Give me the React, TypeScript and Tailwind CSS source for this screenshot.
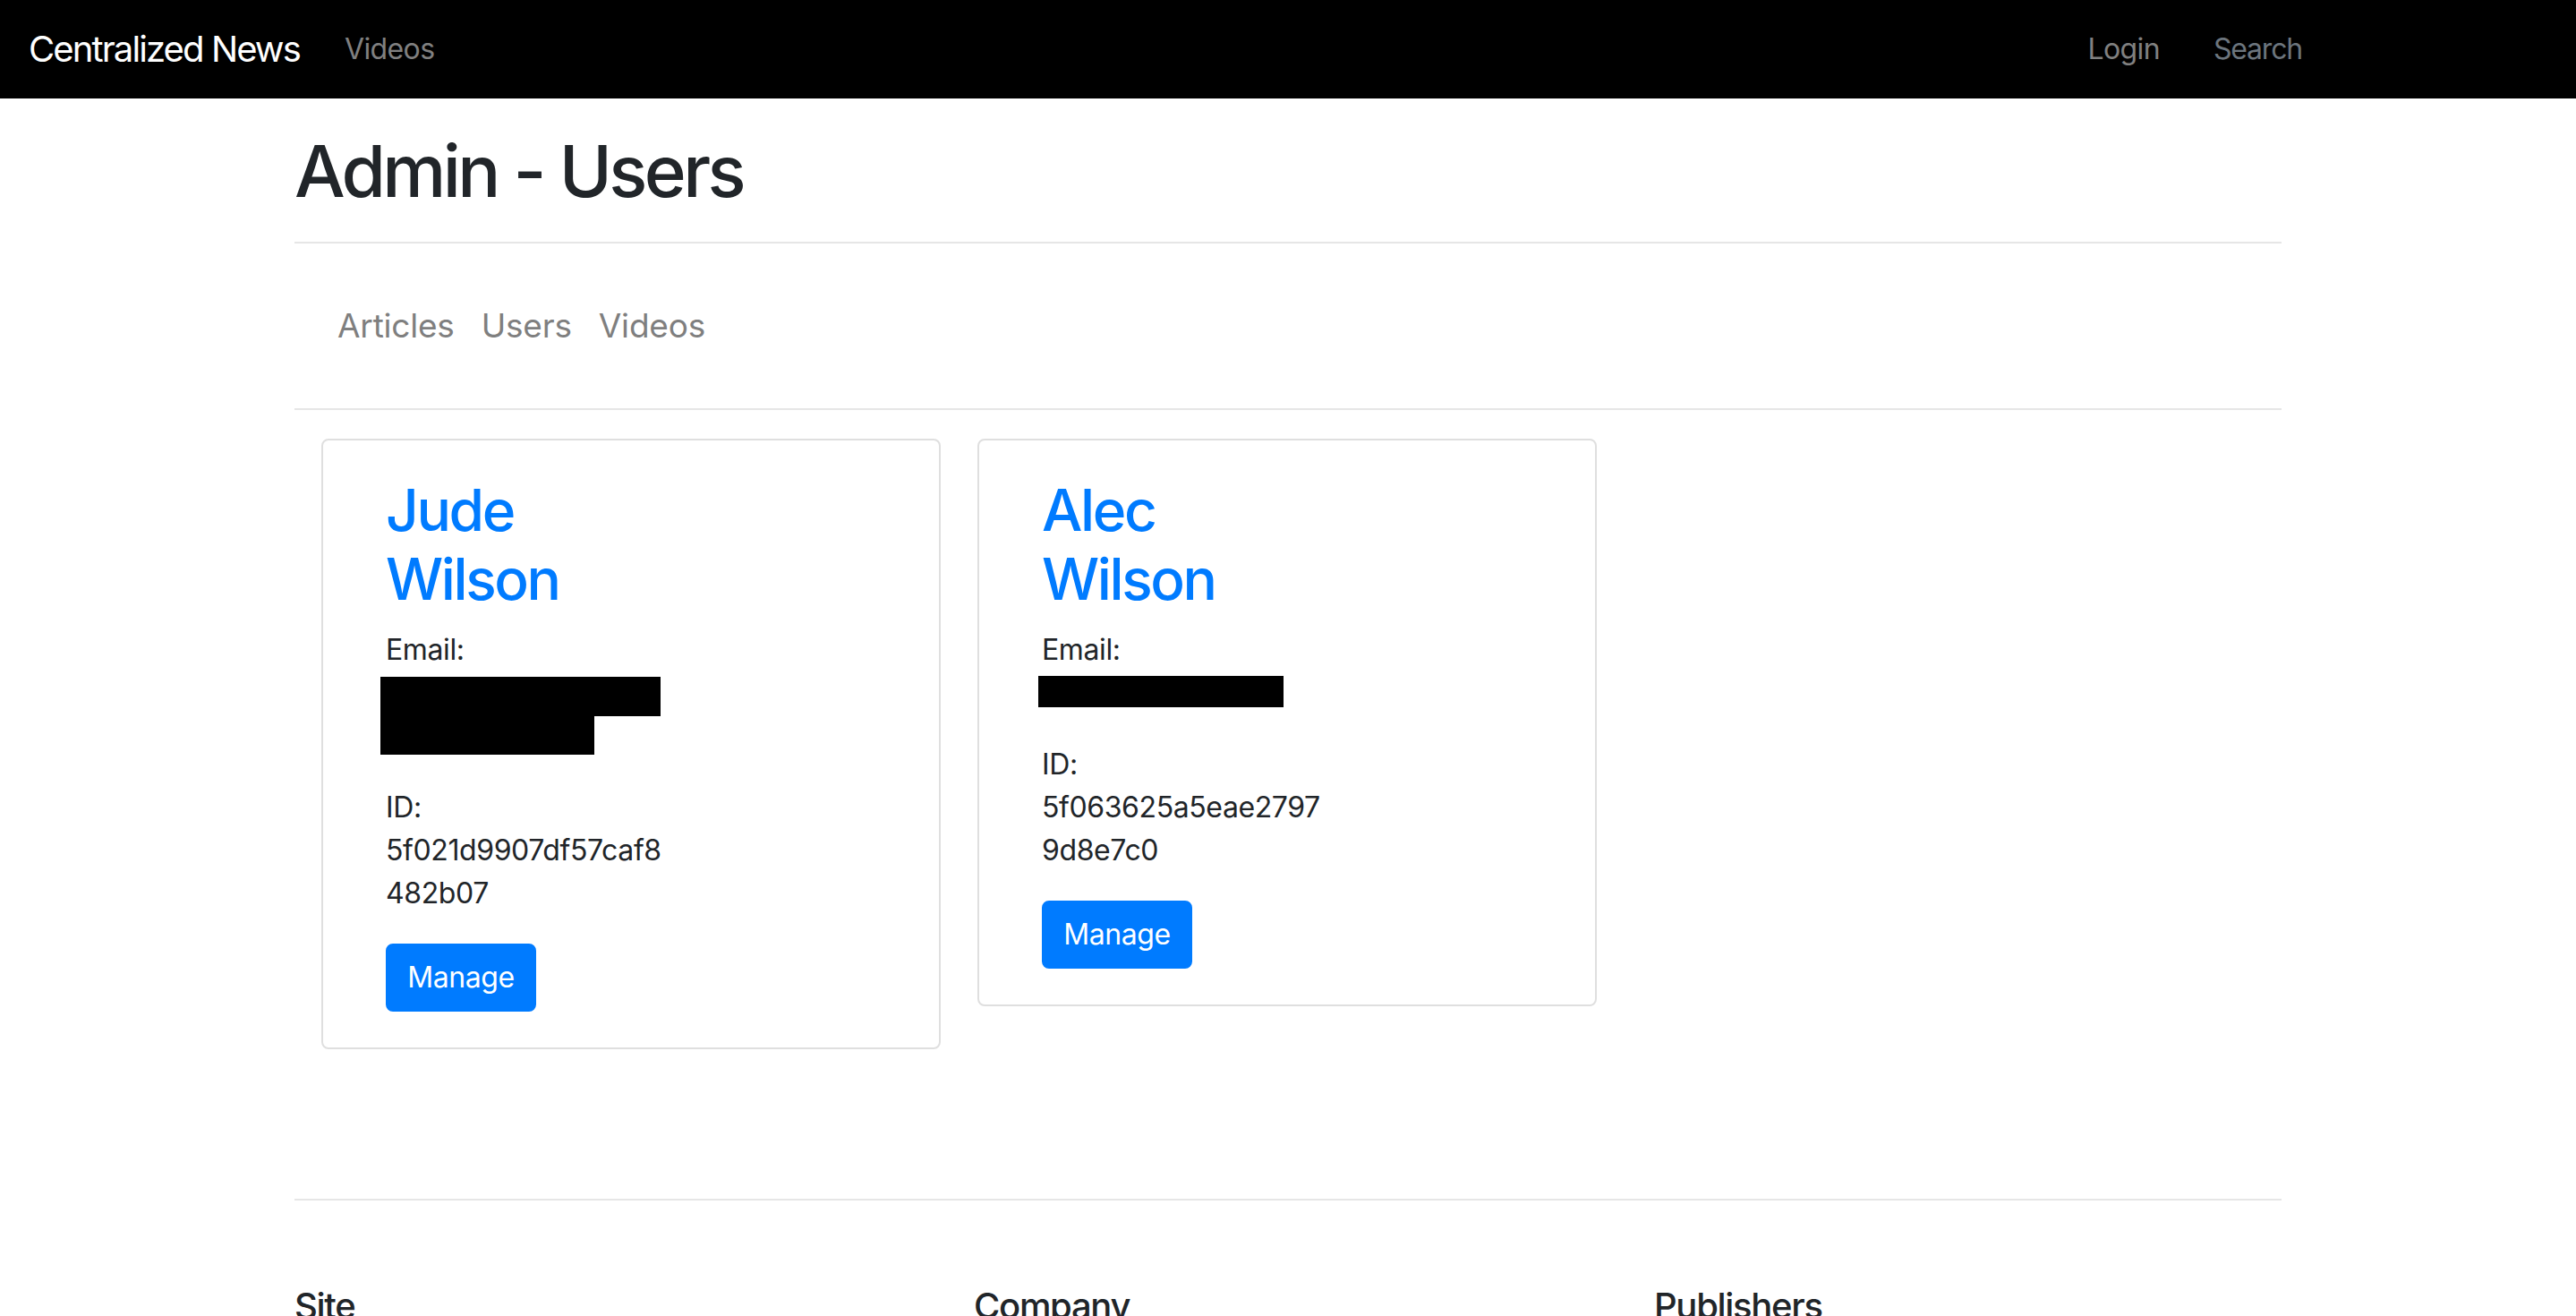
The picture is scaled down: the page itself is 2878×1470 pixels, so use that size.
import React from "react";

type User = {
  first: string;
  last: string;
  idLines: [string, string];
  twoLineEmail: boolean;
};

const users: User[] = [
  { first: "Jude", last: "Wilson", idLines: ["5f021d9907df57caf8", "482b07"], twoLineEmail: true },
  { first: "Alec", last: "Wilson", idLines: ["5f063625a5eae2797", "9d8e7c0"], twoLineEmail: false },
];

function UserCard({ u }: { u: User }) {
  return (
    <div className="w-[692px] shrink-0 rounded-[8px] border-2 border-[#dfdfdf] bg-white pt-[40px] pb-[40px] pl-[70px]">
      <h2 className="mb-[16px] text-[64px] font-medium leading-[76.8px] tracking-[-2.4px] text-[#007bff]">
        {u.first}
        <br />
        {u.last}
      </h2>
      <div className="mb-[32px] text-[32px] leading-[48px] tracking-[-0.4px] text-[#212529]">
        <div>Email:</div>
        {u.twoLineEmail ? (
          <div className="-ml-[6px] h-[96px] pt-[6px]">
            <div className="h-[44px] w-[313px] bg-black" />
            <div className="h-[43px] w-[239px] bg-black" />
          </div>
        ) : (
          <div className="-ml-[4px] h-[48px] pt-[5px]">
            <div className="h-[35px] w-[274px] bg-black" />
          </div>
        )}
      </div>
      <div className="mb-[32px] text-[32px] leading-[48px] tracking-[-0.4px] text-[#212529]">
        <div>ID:</div>
        <div>{u.idLines[0]}</div>
        <div>{u.idLines[1]}</div>
      </div>
      <button className="flex h-[76px] w-[168px] items-center justify-center rounded-[8px] border-2 border-[#007bff] bg-[#007bff] text-[32px] leading-[48px] tracking-[-0.4px] text-white">
        Manage
      </button>
    </div>
  );
}

export default function App() {
  return (
    <div className="min-h-screen bg-white" style={{ fontFamily: "Inter, 'Noto Sans', sans-serif" }}>
      <nav className="flex h-[110px] items-center bg-black pl-[32px] pr-[306px]">
        <span className="text-[40px] leading-[60px] tracking-[-1.9px] text-white">Centralized News</span>
        <span className="ml-[50px] text-[32px] leading-[48px] tracking-[-0.6px] text-[#808080]">Videos</span>
        <div className="ml-auto flex items-center">
          <span className="text-[32px] leading-[48px] tracking-[-0.6px] text-[#808080]">Login</span>
          <span className="ml-[60px] text-[32px] leading-[48px] tracking-[-1.2px] text-[#6c757d]">Search</span>
        </div>
      </nav>

      <main className="mx-auto w-[2220px]">
        <h1 className="mt-[33px] text-[80px] font-medium leading-[96px] tracking-[-3.6px] text-[#212529]">
          Admin - Users
        </h1>
        <div className="mt-[31px] h-[2px] bg-[#e6e6e6]" />
        <div className="flex h-[184px] items-center gap-[30px] pl-[48px] text-[37px] leading-[56px] tracking-[-0.2px] text-[#7f7f7f]">
          <span>Articles</span>
          <span>Users</span>
          <span>Videos</span>
        </div>
        <div className="h-[2px] bg-[#e6e6e6]" />

        <div className="mt-[32px] flex items-start gap-[41px] pl-[30px]">
          {users.map((u) => (
            <UserCard key={u.first} u={u} />
          ))}
        </div>

        <div className="mt-[167px] h-[2px] bg-[#e6e6e6]" />

        <footer className="mt-[94px] grid grid-cols-[759px_760px_1fr] pb-[200px]">
          <h5 className="text-[40px] font-medium leading-[48px] tracking-[-1.3px] text-[#212529]">Site</h5>
          <h5 className="text-[40px] font-medium leading-[48px] tracking-[-1.3px] text-[#212529]">Company</h5>
          <h5 className="text-[40px] font-medium leading-[48px] tracking-[-1.3px] text-[#212529]">Publishers</h5>
        </footer>
      </main>
    </div>
  );
}
